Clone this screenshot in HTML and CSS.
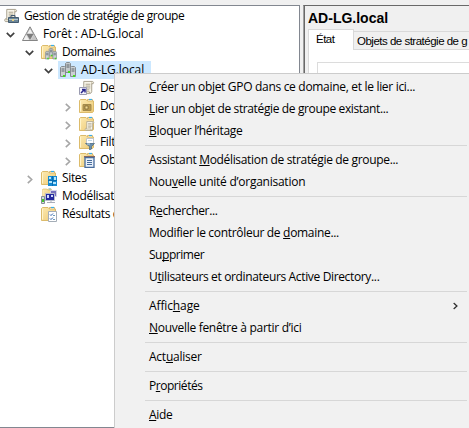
FILE: index.html
```html
<!DOCTYPE html>
<html lang="fr">
<head>
<meta charset="utf-8">
<title>Gestion de stratégie de groupe</title>
<link rel="stylesheet" href="styles.css">
</head>
<body>
<svg class="defs" aria-hidden="true">
  <defs>
    <linearGradient id="gold" x1="0" y1="0" x2="1" y2="1"><stop offset="0" stop-color="#fdeab0"/><stop offset="1" stop-color="#ecc976"/></linearGradient>
    <symbol id="folder" viewBox="0 0 16 16">
      <path d="M8.500 3V1.500H13.500V3" fill="#fff" stroke="#d8b568"/>
      <path d="M10 1.500h3" stroke="#38aee8" stroke-width="1.200"/>
      <path d="M.5 14.500V2.500L1.500 1.500H7L8.500 3H14.500V13.500L13.500 14.500Z" fill="url(#gold)" stroke="#dcbb6b"/>
      <path d="M1.500 13.500V3" stroke="#fff4cb"/>
    </symbol>
    <symbol id="scroll" viewBox="0 0 16 16">
      <path d="M4 1.500H13.500Q15 2 14 4H12.500V12.500Q12 14.500 10 14.500H2.500Q1 13 2.500 11.500H4Z" fill="#f8f5e9" stroke="#a39c89"/>
      <path d="M12.500 4V2.500M3 12.500h7v2" stroke="#b9ad8d" fill="none"/>
      <path d="M6 4.500h5M6 6.500h5M6 8.500h5M6 10.500h4" stroke="#a79f8b"/>
    </symbol>
    <symbol id="server" viewBox="0 0 16 16">
      <path d="M5.500 1.500l1-1h3l1 1v9h-5z" fill="#c3c9cc" stroke="#858c91"/>
      <path d="M.5 5.500l1-1h3l1 1v9h-5zM10.500 5.500l1-1h3l1 1v9h-5z" fill="#ccd1d4" stroke="#858c91"/>
      <path d="M6.500 3h3M6.500 5h3M1.500 7h3M1.500 9h3M11.500 7h3M11.500 9h3" stroke="#5f676c"/>
      <path d="M8 9h2v2H8zM3 13h2v2H3zM13 13h2v2h-2z" fill="#43dc20"/>
    </symbol>
    <symbol id="open" viewBox="0 0 9 6"><path d="M.8.8L4.500 4.500 8.200.8" fill="none" stroke="#404040" stroke-width="1.700"/></symbol>
    <symbol id="closed" viewBox="0 0 6 9"><path d="M.8.8L4.700 4.500.8 8.200" fill="none" stroke="currentColor" stroke-width="1.600"/></symbol>
  </defs>
</svg>

<div class="console">
  <div class="tree">
    <div class="row level0">
      <span class="twist"></span>
      <svg class="icon" viewBox="0 0 16 16"><use href="#scroll" width="15" height="15"/><path d="M8 9V7.500h4V9" fill="none" stroke="#435b70"/><path d="M5.500 9.500h10v5h-10z" fill="#6d8798" stroke="#435b70"/><path d="M6 11.500h9" stroke="#b5c7d1"/><path d="M9 11h2v2H9z" fill="#e9d283"/></svg>
      <span class="label w-root">Gestion de stratégie de groupe</span>
    </div>
    <div class="row level1">
      <span class="twist"><svg class="open"><use href="#open"/></svg></span>
      <svg class="icon" viewBox="0 0 16 16"><path d="M8 .8L15.500 14.500H.5Z" fill="#d5d5d5" stroke="#858585"/><path d="M8 2L11.500 8H4.500Z" fill="#f1f1f1" stroke="#999" stroke-width=".7"/><path d="M4.500 8h7L8 14Z" fill="#7c7c7c"/><path d="M4 9l3 5H1.500Z" fill="#f1f1f1"/><path d="M12 9l2.500 5H9Z" fill="#c4c4c4"/></svg>
      <span class="label w-forest">Forêt : AD-LG.local</span>
    </div>
    <div class="row level2">
      <span class="twist"><svg class="open"><use href="#open"/></svg></span>
      <svg class="icon" viewBox="0 0 16 16"><use href="#folder" width="16" height="16"/><use href="#server" x="4" y="4" width="12" height="12"/></svg>
      <span class="label w-domains">Domaines</span>
    </div>
    <div class="row level3">
      <span class="twist"><svg class="open"><use href="#open"/></svg></span>
      <span class="selected">
        <svg class="icon" viewBox="0 0 16 16"><use href="#server" width="16" height="16"/></svg>
        <span class="label w-local">AD-LG.local</span>
      </span>
    </div>
    <div class="row level4">
      <span class="twist"></span>
      <svg class="icon" viewBox="0 0 16 16"><use href="#scroll" x="1" width="15" height="15"/><path d="M.5 7.500h7v7h-7z" fill="#f4f4fb" stroke="#9a9bb0"/><path d="M2 13l3.500-3.500M3 9.500h3v3" stroke="#29268c" stroke-width="1.500" fill="none"/></svg>
      <span class="label">De</span>
    </div>
    <div class="row level4">
      <span class="twist"><svg class="closed"><use href="#closed"/></svg></span>
      <svg class="icon" viewBox="0 0 16 16"><use href="#folder" width="16" height="16"/><path d="M4 6.500h8v6H4z" fill="#b69850" stroke="#a38a4c"/><path d="M6 8h3v3H6z" fill="#f3db91" stroke="#776030" stroke-width=".7"/></svg>
      <span class="label">Do</span>
    </div>
    <div class="row level4">
      <span class="twist"><svg class="closed"><use href="#closed"/></svg></span>
      <svg class="icon" viewBox="0 0 16 16"><use href="#folder" width="16" height="16"/><use href="#scroll" x="5" y="4" width="11" height="12"/></svg>
      <span class="label">Ob</span>
    </div>
    <div class="row level4">
      <span class="twist"><svg class="closed"><use href="#closed"/></svg></span>
      <svg class="icon" viewBox="0 0 16 16"><use href="#folder" width="16" height="16"/><path d="M7.500 4.500h7v5h-7z" fill="#fff" stroke="#c1c5cb"/><path d="M6.500 9.500h9l-3 3v2.500l-2 1v-3.500Z" fill="#6b8fae" stroke="#49687f" stroke-width=".7"/><path d="M9 6.500h4M8 10h3" stroke="#c1d9e8"/></svg>
      <span class="label">Filt</span>
    </div>
    <div class="row level4">
      <span class="twist"><svg class="closed"><use href="#closed"/></svg></span>
      <svg class="icon" viewBox="0 0 16 16"><use href="#folder" width="16" height="16"/><path d="M5 4h11v1.500H5z" fill="#9b6651"/><path d="M6 5.500h9v10H6z" fill="#e9f1fb" stroke="#486c9c" stroke-width="1.300"/><path d="M8 8.500h5M8 10.500h5M8 12.500h5" stroke="#486c9c"/></svg>
      <span class="label">Ob</span>
    </div>
    <div class="row level2">
      <span class="twist"><svg class="closed"><use href="#closed"/></svg></span>
      <svg class="icon" viewBox="0 0 16 16"><use href="#folder" width="16" height="16"/><path d="M7 6h9v10H7z" fill="#168bd2"/><path d="M8 7h2v2H8zM13 7h2v3h-2zM8 11h3v2H8zM12 12h3v2h-3z" fill="#b6e5fb"/><path d="M11.500 6v10M7 10.500h9" stroke="#086caf"/></svg>
      <span class="label">Sites</span>
    </div>
    <div class="row level2">
      <span class="twist"></span>
      <svg class="icon" viewBox="0 0 16 16"><use href="#folder" x="1" width="11" height="11"/><path d="M9.500 2.500h6v6h-6z" fill="#7570bd" stroke="#d4d3e8"/><path d="M4.500 5.500h9v7h-9z" fill="#252a9d" stroke="#b9becb"/><path d="M6 7h2v3H6zM10 7h2v2h-2z" fill="#d3d9ff"/><path d="M6 14.500h8M10 13v2" stroke="#aaaeb9"/><path d="M.5 8.500h3v7h-3z" fill="#d5dae0" stroke="#858d96"/><path d="M1 11h2v3H1z" fill="#43c42c"/></svg>
      <span class="label w-model">Modélisat</span>
    </div>
    <div class="row level2">
      <span class="twist"></span>
      <svg class="icon" viewBox="0 0 16 16"><use href="#folder" width="16" height="16"/><path d="M7.500 5.500h8v10h-8z" fill="#fff" stroke="#a4adb7"/><path d="M9 8.500l1 1 2-2M9 12.500l1 1 2-2" fill="none" stroke="#285daa"/><path d="M12 9.500h2M12 13.500h2" stroke="#6b9bbb"/></svg>
      <span class="label">Résultats d</span>
    </div>
  </div>

  <div class="details">
    <h1>AD-LG.local</h1>
    <div class="tabs">
      <div class="tab active">État</div>
      <div class="tab other">Objets de stratégie de g</div>
    </div>
    <div class="sheet"><div class="group"></div></div>
  </div>
</div>

<div class="menu">
  <div class="item"><span class="m1"><u>C</u>réer un objet GPO dans ce domaine, et le lier ici...</span></div>
  <div class="item"><span class="m2"><u>L</u>ier un objet de stratégie de groupe existant...</span></div>
  <div class="item"><span class="m3"><u>B</u>loquer l’héritage</span></div>
  <div class="sep"></div>
  <div class="item"><span class="m4">Assistant <u>M</u>odélisation de stratégie de groupe...</span></div>
  <div class="item"><span class="m5">Nou<u>v</u>elle unité d’organisation</span></div>
  <div class="sep"></div>
  <div class="item"><span>R<u>e</u>chercher...</span></div>
  <div class="item"><span class="m7">Modifier le contrôleur de <u>d</u>omaine...</span></div>
  <div class="item"><span class="m8">Su<u>p</u>primer</span></div>
  <div class="item"><span>U<u>t</u>ilisateurs et ordinateurs Active Directory...</span></div>
  <div class="sep"></div>
  <div class="item"><span class="m10">Affic<u>h</u>age</span><svg class="arrow" viewBox="0 0 6 9"><use href="#closed" width="6" height="9"/></svg></div>
  <div class="item"><span class="m11"><u>N</u>ouvelle fenêtre à partir d’ici</span></div>
  <div class="sep"></div>
  <div class="item"><span class="m12">Act<u>u</u>aliser</span></div>
  <div class="sep"></div>
  <div class="item"><span class="m13">P<u>r</u>opriétés</span></div>
  <div class="sep"></div>
  <div class="item"><span><u>A</u>ide</span></div>
</div>
</body>
</html>
```
FILE: styles.css
```css
* { box-sizing: border-box; }
body {
  margin: 0;
  width: 469px;
  height: 428px;
  overflow: hidden;
  background: #f0f0f0;
  color: #000;
  font: 12px/18px "Open Sans", "Noto Sans", sans-serif;
  letter-spacing: -.35px;
}
.defs { position: absolute; width: 0; height: 0; }
.console { display: flex; height: 428px; padding-top: 5px; }
.tree {
  width: 300px;
  flex: none;
  background: #fff;
  border: 1px solid #828790;
  border-left: 0;
  padding-top: 1px;
  overflow: hidden;
}
.row { display: flex; align-items: center; height: 18px; white-space: nowrap; }
.level1 { padding-left: 3px; }
.level2 { padding-left: 22px; }
.level3 { padding-left: 41px; }
.level4 { padding-left: 60px; }
.twist { width: 19px; flex: none; display: flex; padding-left: 3px; color: #a6a6a6; }
.level0 .twist { width: 3px; padding: 0; }
.open { width: 9px; height: 6px; margin-top: 1px; }
.closed { width: 6px; height: 9px; margin: 2px 0 0 2px; }
.icon { width: 16px; height: 16px; flex: none; margin-right: 5px; }
.w-root { letter-spacing: -.41px; }
.w-forest { letter-spacing: -.12px; }
.w-domains { letter-spacing: -.45px; }
.w-local { letter-spacing: -.08px; }
.w-model { letter-spacing: -.3px; }
.selected {
  display: flex;
  align-items: center;
  width: 93px;
  height: 18px;
  margin-left: -2px;
  padding-left: 2px;
  background: #cce8ff;
}
.details {
  flex: 1;
  min-width: 0;
  margin-left: 3px;
  border-left: 1px solid #a0a0a0;
  border-top: 1px solid #696969;
  box-shadow: inset 1px 0 #696969;
  padding-left: 4px;
  overflow: hidden;
}
h1 {
  margin: 0;
  height: 23px;
  font: bold 14px/24px "Liberation Sans", Arial, sans-serif;
  letter-spacing: 0;
}
.tabs {
  display: flex;
  align-items: flex-end;
  height: 21px;
  font: 11.5px/19px "Liberation Sans", Arial, sans-serif;
  letter-spacing: -.5px;
  white-space: nowrap;
}
.tab.active {
  width: 46px;
  height: 21px;
  flex: none;
  padding-left: 7px;
  background: #fff;
  border: 1px solid #d9d9d9;
  border-bottom: 0;
}
.tab.other {
  width: 180px;
  flex: none;
  height: 19px;
  padding-left: 3px;
  border-top: 1px solid #d9d9d9;
  border-bottom: 1px solid #d9d9d9;
}
.sheet { height: 400px; padding: 12px 0 0 8px; background: #fff; border-left: 1px solid #d9d9d9; }
.group { height: 380px; border: 1px solid #dcdcdc; border-right: 0; }
.menu {
  position: absolute;
  left: 114px;
  top: 73px;
  width: 356px;
  height: 356px;
  padding: 2px;
  background: #f1f1f1;
  border: 1px solid #ccc;
}
.item {
  display: flex;
  align-items: center;
  justify-content: space-between;
  height: 22px;
  padding: 0 9px 0 32px;
  white-space: nowrap;
}
.item u { text-decoration-thickness: 1px; text-underline-offset: 1px; text-decoration-skip-ink: none; }
.m1, .m7 { letter-spacing: -.31px; }
.m2 { letter-spacing: -.37px; }
.m3, .m11 { letter-spacing: -.29px; }
.m4 { letter-spacing: -.33px; }
.m5 { letter-spacing: -.25px; }
.m8, .m13 { letter-spacing: -.46px; }
.m10 { letter-spacing: -.12px; }
.m12 { letter-spacing: -.25px; }
.arrow { width: 5px; height: 8px; color: #333; }
.sep { height: 1px; margin: 3px 0 3px 28px; background: #d7d7d7; }
```
